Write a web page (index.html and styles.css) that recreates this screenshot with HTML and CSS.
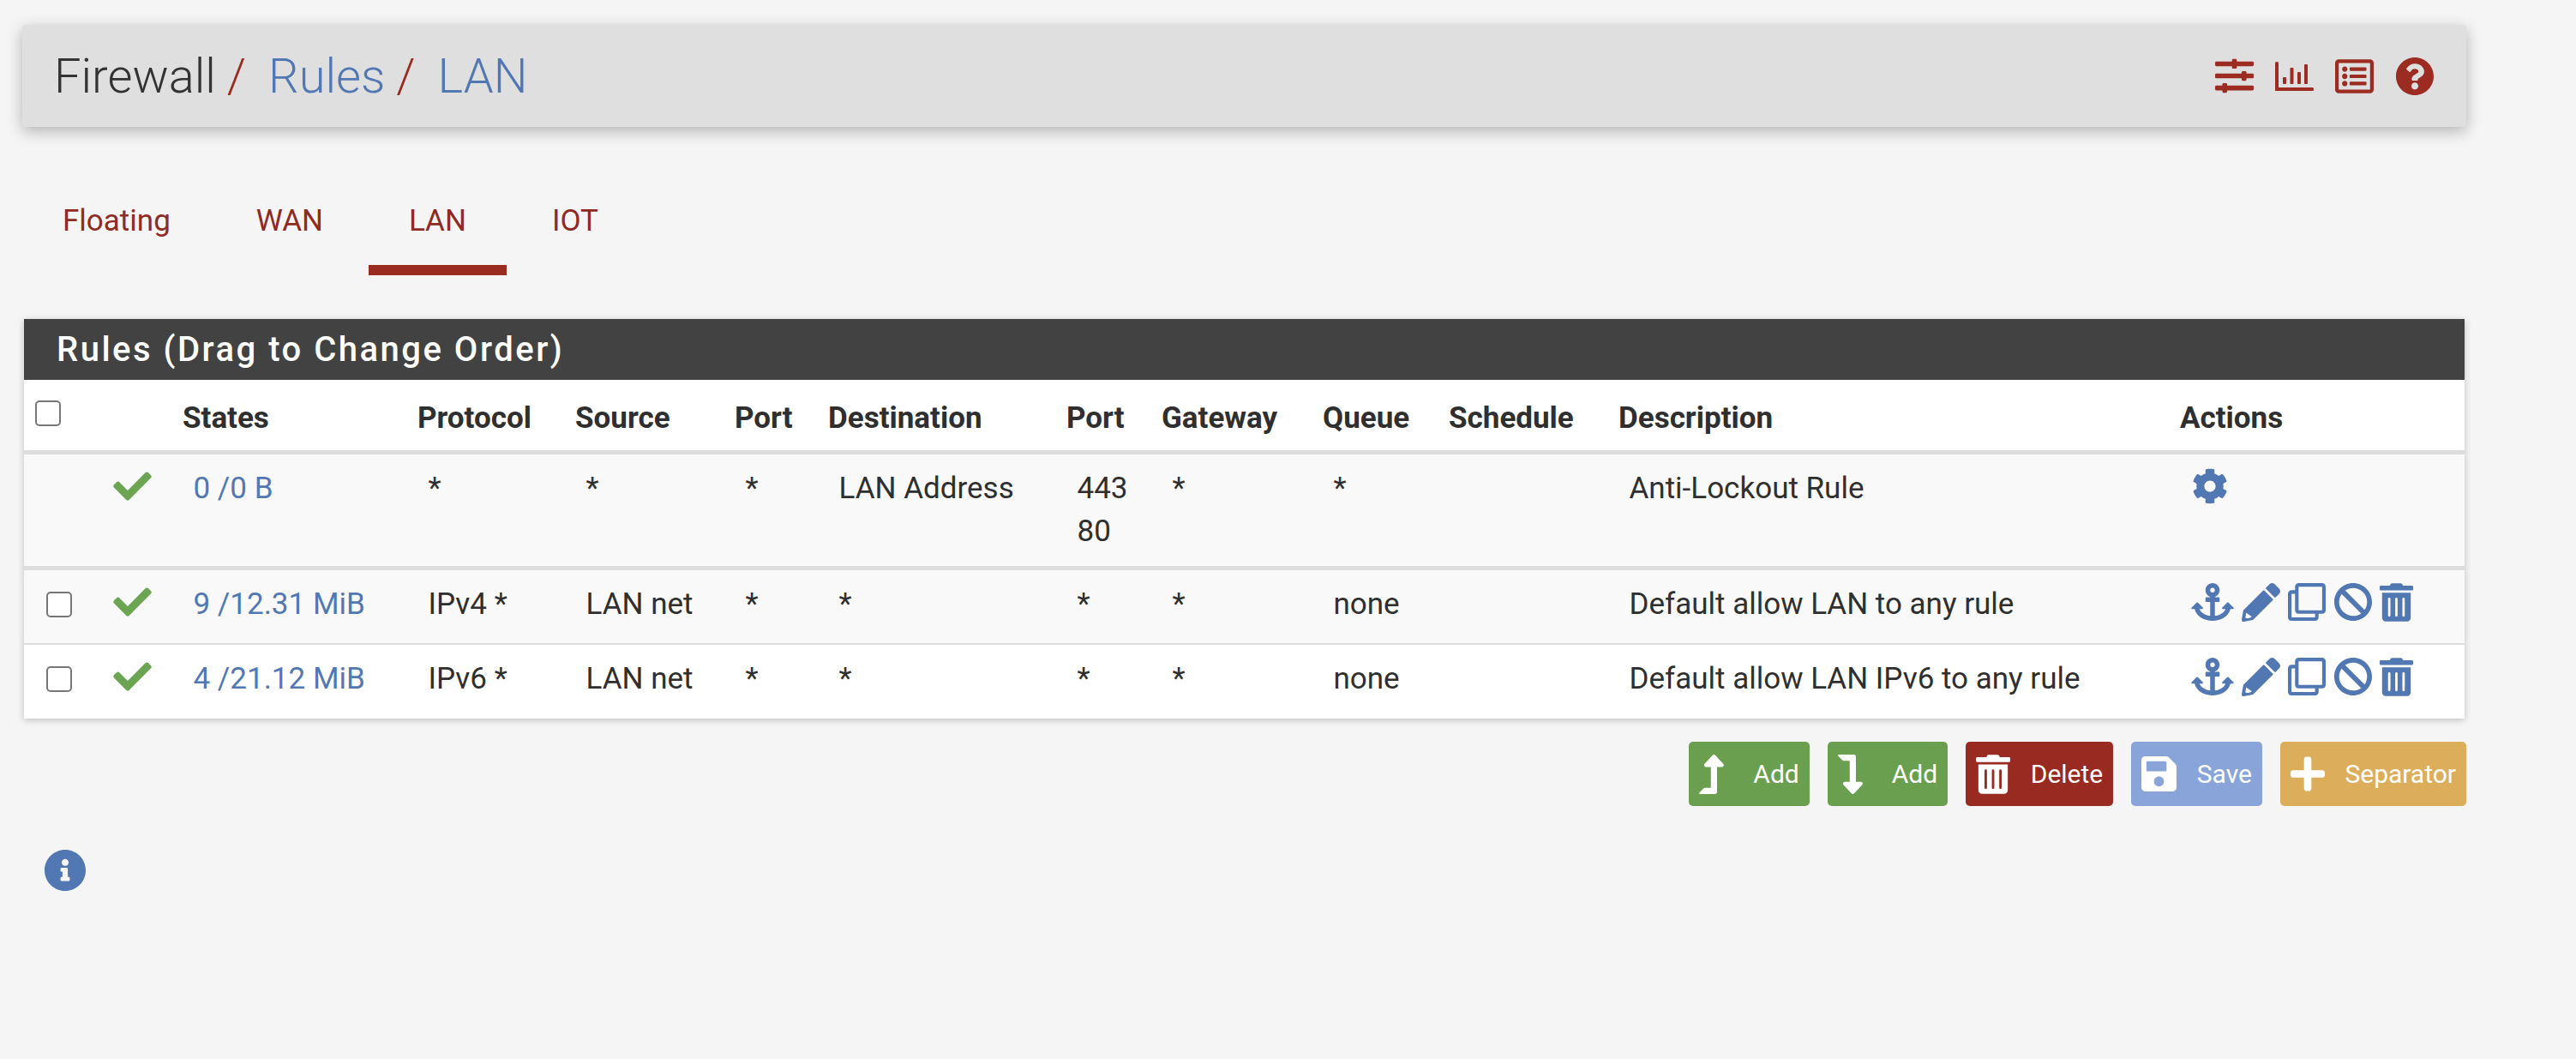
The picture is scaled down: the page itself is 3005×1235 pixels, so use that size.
FILE: index.html
```html
<!DOCTYPE html>
<html lang="en">
<head>
<meta charset="utf-8">
<title>Firewall / Rules / LAN</title>
<link rel="stylesheet" href="styles.css">
</head>
<body>
<svg class="defs" aria-hidden="true">
  <symbol id="i-sliders" viewBox="0 0 512 512"><path d="M496 384H160v-16c0-8.8-7.2-16-16-16h-32c-8.8 0-16 7.2-16 16v16H16c-8.8 0-16 7.2-16 16v32c0 8.8 7.2 16 16 16h80v16c0 8.8 7.2 16 16 16h32c8.8 0 16-7.2 16-16v-16h336c8.8 0 16-7.2 16-16v-32c0-8.8-7.2-16-16-16zm0-160h-80v-16c0-8.8-7.2-16-16-16h-32c-8.8 0-16 7.2-16 16v16H16c-8.8 0-16 7.2-16 16v32c0 8.8 7.2 16 16 16h336v16c0 8.8 7.2 16 16 16h32c8.8 0 16-7.2 16-16v-16h80c8.8 0 16-7.2 16-16v-32c0-8.8-7.2-16-16-16zm0-160H288V48c0-8.8-7.2-16-16-16h-32c-8.8 0-16 7.2-16 16v16H16C7.2 64 0 71.2 0 80v32c0 8.8 7.2 16 16 16h208v16c0 8.8 7.2 16 16 16h32c8.8 0 16-7.2 16-16v-16h208c8.8 0 16-7.2 16-16V80c0-8.8-7.2-16-16-16z"/></symbol>
  <symbol id="i-chart" viewBox="0 0 45 34"><rect width="4" height="34" rx="1.5"/><rect y="30" width="45" height="4" rx="1.5"/><rect x="9" y="18" width="4" height="8" rx="1"/><rect x="17.5" y="7" width="4" height="19" rx="1"/><rect x="26" y="12" width="4" height="14" rx="1"/><rect x="34" y="3" width="4" height="23" rx="1"/></symbol>
  <symbol id="i-list" viewBox="0 32 512 448"><path d="M464 32H48C21.49 32 0 53.49 0 80v352c0 26.51 21.49 48 48 48h416c26.51 0 48-21.49 48-48V80c0-26.51-21.49-48-48-48zm-6 400H54a6 6 0 0 1-6-6V86a6 6 0 0 1 6-6h404a6 6 0 0 1 6 6v340a6 6 0 0 1-6 6zm-42-92v24c0 6.627-5.373 12-12 12H204c-6.627 0-12-5.373-12-12v-24c0-6.627 5.373-12 12-12h200c6.627 0 12 5.373 12 12zm0-96v24c0 6.627-5.373 12-12 12H204c-6.627 0-12-5.373-12-12v-24c0-6.627 5.373-12 12-12h200c6.627 0 12 5.373 12 12zm0-96v24c0 6.627-5.373 12-12 12H204c-6.627 0-12-5.373-12-12v-24c0-6.627 5.373-12 12-12h200c6.627 0 12 5.373 12 12zm-252 12c0 19.882-16.118 36-36 36s-36-16.118-36-36 16.118-36 36-36 36 16.118 36 36zm0 96c0 19.882-16.118 36-36 36s-36-16.118-36-36 16.118-36 36-36 36 16.118 36 36zm0 96c0 19.882-16.118 36-36 36s-36-16.118-36-36 16.118-36 36-36 36 16.118 36 36z"/></symbol>
  <symbol id="i-help" viewBox="8 8 496 496"><path d="M504 256c0 136.997-111.043 248-248 248S8 392.997 8 256C8 119.083 119.043 8 256 8s248 111.083 248 248zM262.655 90c-54.497 0-89.255 22.957-116.549 63.758-3.536 5.286-2.353 12.415 2.715 16.258l34.699 26.31c5.205 3.947 12.621 3.008 16.665-2.122 17.864-22.658 30.113-35.797 57.303-35.797 20.429 0 45.698 13.148 45.698 32.958 0 14.976-12.363 22.667-32.534 33.976C247.128 238.528 216 254.941 216 296v4c0 6.627 5.373 12 12 12h56c6.627 0 12-5.373 12-12v-1.333c0-28.462 83.186-29.647 83.186-106.667 0-58.002-60.165-102-116.531-102zM256 338c-25.365 0-46 20.635-46 46 0 25.364 20.635 46 46 46s46-20.636 46-46c0-25.365-20.635-46-46-46z"/></symbol>
  <symbol id="i-check" viewBox="0 60 512 392"><path d="M173.898 439.404l-166.4-166.4c-9.997-9.997-9.997-26.206 0-36.204l36.203-36.204c9.997-9.998 26.207-9.998 36.204 0L192 312.69 432.095 72.596c9.997-9.997 26.207-9.997 36.204 0l36.203 36.204c9.997 9.997 9.997 26.206 0 36.204l-294.4 294.401c-9.998 9.997-26.207 9.997-36.204-.001z"/></symbol>
  <symbol id="i-cog" viewBox="0 0 512 512"><path d="M487.4 315.7l-42.6-24.6c4.3-23.2 4.3-47 0-70.2l42.6-24.6c4.9-2.8 7.1-8.6 5.5-14-11.1-35.6-30-67.8-54.7-94.6-3.8-4.1-10-5.1-14.8-2.3L380.8 110c-17.9-15.4-38.5-27.3-60.8-35.1V25.8c0-5.6-3.9-10.5-9.4-11.7-36.7-8.2-74.3-7.8-109.2 0-5.5 1.2-9.4 6.1-9.4 11.7V75c-22.2 7.9-42.8 19.8-60.8 35.1L88.7 85.5c-4.9-2.8-11-1.9-14.8 2.3-24.7 26.7-43.6 58.9-54.7 94.6-1.7 5.4.6 11.2 5.5 14L67.3 221c-4.3 23.2-4.3 47 0 70.2l-42.6 24.6c-4.9 2.8-7.1 8.6-5.5 14 11.1 35.6 30 67.8 54.7 94.6 3.8 4.1 10 5.1 14.8 2.3l42.6-24.6c17.9 15.4 38.5 27.3 60.8 35.1v49.2c0 5.6 3.9 10.5 9.4 11.7 36.7 8.2 74.3 7.8 109.2 0 5.5-1.2 9.4-6.1 9.4-11.7v-49.2c22.2-7.9 42.8-19.8 60.8-35.1l42.6 24.6c4.9 2.8 11 1.9 14.8-2.3 24.7-26.7 43.6-58.9 54.7-94.6 1.5-5.5-.7-11.3-5.6-14.1zM256 336c-44.1 0-80-35.9-80-80s35.9-80 80-80 80 35.9 80 80-35.9 80-80 80z"/></symbol>
  <symbol id="i-anchor" viewBox="0 0 576 512"><path d="M12.971 352h32.394C67.172 454.735 181.944 512 288 512c106.229 0 220.853-57.38 242.635-160h32.394c10.691 0 16.045-12.926 8.485-20.485l-67.029-67.029c-4.686-4.686-12.284-4.686-16.971 0l-67.029 67.029c-7.56 7.56-2.206 20.485 8.485 20.485h35.146c-20.29 54.317-84.963 86.588-144.117 94.015V256h52c6.627 0 12-5.373 12-12v-40c0-6.627-5.373-12-12-12h-52v-5.47c37.281-13.178 63.995-48.725 64-90.518C384.005 43.772 341.605.738 289.37.01 235.723-.739 192 42.525 192 96c0 41.798 26.716 77.35 64 90.53V192h-52c-6.627 0-12 5.373-12 12v40c0 6.627 5.373 12 12 12h52v190.015c-58.936-7.399-123.82-39.679-144.117-94.015h35.146c10.691 0 16.045-12.925 8.485-20.485l-67.029-67.029c-4.686-4.686-12.284-4.686-16.971 0L4.485 331.515C-3.074 339.074 2.28 352 12.971 352zM288 64c17.645 0 32 14.355 32 32s-14.355 32-32 32-32-14.355-32-32 14.355-32 32-32z"/></symbol>
  <symbol id="i-pencil" viewBox="0 0 512 512"><path fill-rule="evenodd" d="M497.9 142.1l-46.1 46.1c-4.7 4.7-12.3 4.7-17 0l-111-111c-4.7-4.7-4.7-12.3 0-17l46.1-46.1c18.7-18.7 49.1-18.7 67.9 0l60.1 60.1c18.8 18.7 18.8 49.1 0 67.9zM284.2 99.8L21.6 362.4.4 483.9c-2.9 16.4 11.4 30.6 27.8 27.8l121.5-21.3 262.6-262.6c4.7-4.7 4.7-12.3 0-17l-111-111c-4.8-4.7-12.4-4.7-17.1 0zM60 392L135 446 88 470 48 462z"/></symbol>
  <symbol id="i-copy" viewBox="0 0 512 512"><path d="M464 0H144c-26.51 0-48 21.49-48 48v48H48c-26.51 0-48 21.49-48 48v320c0 26.51 21.49 48 48 48h320c26.51 0 48-21.49 48-48v-48h48c26.51 0 48-21.49 48-48V48c0-26.51-21.49-48-48-48zM362 464H54a6 6 0 0 1-6-6V150a6 6 0 0 1 6-6h42v224c0 26.51 21.49 48 48 48h224v42a6 6 0 0 1-6 6zm96-96H150a6 6 0 0 1-6-6V54a6 6 0 0 1 6-6h308a6 6 0 0 1 6 6v308a6 6 0 0 1-6 6z"/></symbol>
  <symbol id="i-ban" viewBox="8 8 496 496"><path d="M256 8C119.034 8 8 119.033 8 256s111.034 248 248 248 248-111.034 248-248S392.967 8 256 8zm130.108 117.892c65.448 65.448 70 165.481 20.677 235.637L150.47 105.216c70.204-49.356 170.226-44.735 235.638 20.676zM125.892 386.108c-65.448-65.448-70-165.481-20.677-235.637L361.53 406.784c-70.203 49.356-170.226 44.736-235.638-20.676z"/></symbol>
  <symbol id="i-trash" viewBox="0 0 448 512"><path d="M32 464a48 48 0 0 0 48 48h288a48 48 0 0 0 48-48V128H32zm272-256a16 16 0 0 1 32 0v224a16 16 0 0 1-32 0zm-96 0a16 16 0 0 1 32 0v224a16 16 0 0 1-32 0zm-96 0a16 16 0 0 1 32 0v224a16 16 0 0 1-32 0zM432 32H312l-9.4-18.7A24 24 0 0 0 281.1 0H166.8a23.72 23.72 0 0 0-21.4 13.3L136 32H16A16 16 0 0 0 0 48v32a16 16 0 0 0 16 16h416a16 16 0 0 0 16-16V48a16 16 0 0 0-16-16z"/></symbol>
  <symbol id="i-up" viewBox="0 0 320 512"><path d="M313.553 119.669L209.587 7.666c-9.485-10.214-25.676-10.229-35.174 0L70.438 119.669C56.232 134.969 67.062 160 88.025 160H152v272H68.024a11.996 11.996 0 0 0-8.485 3.515l-56 56C-4.021 499.074 1.333 512 12.024 512H208c13.255 0 24-10.745 24-24V160h63.966c20.878 0 31.851-24.969 17.587-40.331z"/></symbol>
  <symbol id="i-down" viewBox="0 0 320 512"><path d="M313.553 392.331L209.587 504.334c-9.485 10.214-25.676 10.229-35.174 0L70.438 392.331C56.232 377.031 67.062 352 88.025 352H152V80H68.024a11.996 11.996 0 0 1-8.485-3.515l-56-56C-4.021 12.926 1.333 0 12.024 0H208c13.255 0 24 10.745 24 24v328h63.966c20.878 0 31.851 24.969 17.587 40.331z"/></symbol>
  <symbol id="i-save" viewBox="0 32 448 448"><path d="M433.941 129.941l-83.882-83.882A48 48 0 0 0 316.118 32H48C21.49 32 0 53.49 0 80v352c0 26.51 21.49 48 48 48h352c26.51 0 48-21.49 48-48V163.882a48 48 0 0 0-14.059-33.941zM224 416c-35.346 0-64-28.654-64-64 0-35.346 28.654-64 64-64s64 28.654 64 64c0 35.346-28.654 64-64 64zm96-304.52V212c0 6.627-5.373 12-12 12H76c-6.627 0-12-5.373-12-12V108c0-6.627 5.373-12 12-12h228.52c3.183 0 6.235 1.264 8.485 3.515l3.48 3.48A11.996 11.996 0 0 1 320 111.48z"/></symbol>
  <symbol id="i-plus" viewBox="0 32 448 448"><path d="M416 208H272V64c0-17.67-14.33-32-32-32h-32c-17.67 0-32 14.33-32 32v144H32c-17.67 0-32 14.33-32 32v32c0 17.67 14.33 32 32 32h144v144c0 17.67 14.33 32 32 32h32c17.67 0 32-14.33 32-32V304h144c17.67 0 32-14.33 32-32v-32c0-17.67-14.33-32-32-32z"/></symbol>
  <symbol id="i-info" viewBox="8 8 496 496"><path d="M256 8C119.043 8 8 119.083 8 256c0 136.997 111.043 248 248 248s248-111.003 248-248C504 119.083 392.957 8 256 8zm0 110c23.196 0 42 18.804 42 42s-18.804 42-42 42-42-18.804-42-42 18.804-42 42-42zm56 254c0 6.627-5.373 12-12 12h-88c-6.627 0-12-5.373-12-12v-24c0-6.627 5.373-12 12-12h12v-64h-12c-6.627 0-12-5.373-12-12v-24c0-6.627 5.373-12 12-12h64c6.627 0 12 5.373 12 12v100h12c6.627 0 12 5.373 12 12v24z"/></symbol>
</svg>

<div class="page">
  <header class="topbar">
    <h1 class="crumbs">
      <span class="crumb-text">Firewall</span><span class="slash">/</span>
      <a class="crumb-link" href="#">Rules</a><span class="slash">/</span>
      <a class="crumb-link" href="#">LAN</a>
    </h1>
    <nav class="shortcuts">
      <svg class="sc-sliders"><use href="#i-sliders"/></svg>
      <svg class="sc-chart"><use href="#i-chart"/></svg>
      <svg class="sc-list"><use href="#i-list"/></svg>
      <svg class="sc-help"><use href="#i-help"/></svg>
    </nav>
  </header>

  <ul class="tabs">
    <li><a href="#">Floating</a></li>
    <li><a href="#">WAN</a></li>
    <li class="active"><a href="#">LAN</a></li>
    <li><a href="#">IOT</a></li>
  </ul>

  <section class="panel">
    <h2 class="panel-title">Rules (Drag to Change Order)</h2>
    <table class="rules">
      <colgroup>
        <col class="c1"><col class="c2"><col class="c3"><col class="c4"><col class="c5"><col class="c6"><col class="c7"><col class="c8"><col class="c9"><col class="c10"><col class="c11"><col class="c12"><col class="c13">
      </colgroup>
      <thead>
        <tr>
          <th class="head-box"><input type="checkbox" class="box"></th>
          <th></th>
          <th>States</th>
          <th>Protocol</th>
          <th>Source</th>
          <th>Port</th>
          <th>Destination</th>
          <th>Port</th>
          <th>Gateway</th>
          <th>Queue</th>
          <th>Schedule</th>
          <th>Description</th>
          <th>Actions</th>
        </tr>
      </thead>
      <tbody>
        <tr class="lockout">
          <td></td>
          <td class="cell-check"><svg class="ok"><use href="#i-check"/></svg></td>
          <td><a href="#">0 /0 B</a></td>
          <td>*</td>
          <td>*</td>
          <td>*</td>
          <td>LAN Address</td>
          <td>443<br>80</td>
          <td>*</td>
          <td>*</td>
          <td></td>
          <td>Anti-Lockout Rule</td>
          <td class="cell-actions"><div class="actions"><svg class="a-cog"><use href="#i-cog"/></svg></div></td>
        </tr>
        <tr class="striped">
          <td class="cell-box"><input type="checkbox" class="box"></td>
          <td class="cell-check"><svg class="ok"><use href="#i-check"/></svg></td>
          <td><a href="#">9 /12.31 MiB</a></td>
          <td>IPv4 *</td>
          <td>LAN net</td>
          <td>*</td>
          <td>*</td>
          <td>*</td>
          <td>*</td>
          <td>none</td>
          <td></td>
          <td>Default allow LAN to any rule</td>
          <td class="cell-actions"><div class="actions">
            <svg class="a-anchor"><use href="#i-anchor"/></svg>
            <svg class="a-pencil"><use href="#i-pencil"/></svg>
            <svg class="a-copy"><use href="#i-copy"/></svg>
            <svg class="a-ban"><use href="#i-ban"/></svg>
            <svg class="a-trash"><use href="#i-trash"/></svg>
          </div></td>
        </tr>
        <tr class="plain">
          <td class="cell-box"><input type="checkbox" class="box"></td>
          <td class="cell-check"><svg class="ok"><use href="#i-check"/></svg></td>
          <td><a href="#">4 /21.12 MiB</a></td>
          <td>IPv6 *</td>
          <td>LAN net</td>
          <td>*</td>
          <td>*</td>
          <td>*</td>
          <td>*</td>
          <td>none</td>
          <td></td>
          <td>Default allow LAN IPv6 to any rule</td>
          <td class="cell-actions"><div class="actions">
            <svg class="a-anchor"><use href="#i-anchor"/></svg>
            <svg class="a-pencil"><use href="#i-pencil"/></svg>
            <svg class="a-copy"><use href="#i-copy"/></svg>
            <svg class="a-ban"><use href="#i-ban"/></svg>
            <svg class="a-trash"><use href="#i-trash"/></svg>
          </div></td>
        </tr>
      </tbody>
    </table>
  </section>

  <div class="buttons">
    <button class="btn btn-green btn-add"><svg class="bi-level"><use href="#i-up"/></svg>Add</button>
    <button class="btn btn-green btn-add"><svg class="bi-level"><use href="#i-down"/></svg>Add</button>
    <button class="btn btn-red"><svg class="bi-trash"><use href="#i-trash"/></svg>Delete</button>
    <button class="btn btn-blue"><svg class="bi-save"><use href="#i-save"/></svg>Save</button>
    <button class="btn btn-amber"><svg class="bi-plus"><use href="#i-plus"/></svg>Separator</button>
  </div>

  <svg class="info"><use href="#i-info"/></svg>
</div>
</body>
</html>
```
FILE: styles.css
```css
* { box-sizing: border-box; }
html, body { margin: 0; padding: 0; }
body {
  background: #f5f5f5;
  color: #2f2f2f;
  font-family: Roboto, "Liberation Sans", sans-serif;
  font-size: 35px;
  line-height: 50px;
}
a { color: inherit; text-decoration: none; }
svg { display: block; fill: currentColor; }
.defs { position: absolute; width: 0; height: 0; overflow: hidden; }

.page { width: 2877px; padding: 29px 0 0 26px; }

/* Top bar */
.topbar {
  display: flex;
  align-items: center;
  justify-content: space-between;
  height: 119px;
  padding: 0 38px 0 37px;
  background: #dfdfdf;
  border-radius: 4px;
  box-shadow: 0 5px 18px rgba(0, 0, 0, .28);
}
.crumbs {
  display: flex;
  align-items: baseline;
  margin: 0;
  font-size: 56px;
  font-weight: 300;
  line-height: 70px;
  white-space: pre;
}
.crumb-text { color: #333; }
.crumb-link { color: #5278b4; }
.slash { color: #992b21; margin: 0 26px 0 13px; }
.shortcuts {
  display: flex;
  align-items: center;
  gap: 25px;
  color: #9c2b22;
}
.sc-sliders { width: 45px; height: 45px; }
.sc-chart { width: 45px; height: 34px; }
.sc-list { width: 45px; height: 40px; }
.sc-help { width: 44px; height: 44px; margin-left: 1px; }

/* Tabs */
.tabs {
  display: flex;
  gap: 6px;
  margin: 85px 0 51px;
  padding: 0;
  list-style: none;
  font-size: 35px;
  color: #8e2c24;
}
.tabs a {
  display: block;
  padding: 0 47px 26px;
  border-bottom: 12px solid transparent;
}
.tabs .active a { border-bottom-color: #992b21; }

/* Panel */
.panel {
  margin: 0 2px 27px;
  background: #fff;
  box-shadow: 0 2px 8px rgba(0, 0, 0, .22);
}
.panel-title {
  margin: 0;
  height: 71px;
  padding-left: 38px;
  background: #424242;
  color: #fff;
  font-size: 40px;
  font-weight: 500;
  line-height: 71px;
  letter-spacing: 2.5px;
}
.rules { width: 2847px; table-layout: fixed; border-collapse: separate; border-spacing: 0; }
.c1 { width: 92px; } .c2 { width: 81px; } .c3 { width: 274px; } .c4 { width: 184px; }
.c5 { width: 186px; } .c6 { width: 109px; } .c7 { width: 278px; } .c8 { width: 111px; }
.c9 { width: 188px; } .c10 { width: 147px; } .c11 { width: 198px; } .c12 { width: 655px; }
.c13 { width: 344px; }

.rules th {
  padding: 20px 0 12px 12px;
  border-bottom: 5px solid #ddd;
  text-align: left;
  font-weight: 700;
  vertical-align: top;
}
.rules th.head-box { padding-left: 13px; }
.rules th .box { margin-top: 4px; }
.rules td {
  padding: 15px 0 15px 24.5px;
  vertical-align: top;
  white-space: nowrap;
}
.rules td a { color: #5278b4; }
.lockout td { background: #f9f9f9; border-bottom: 5px solid #ddd; height: 135px; }
.striped td { background: #f9f9f9; border-bottom: 2px solid #ddd; height: 87px; }
.plain td { height: 86px; }
.rules td.cell-check { padding-left: 12px; padding-top: 20px; color: #6ba551; }
.rules td.cell-box { padding-top: 25px; padding-left: 26px; }
.ok { width: 45px; height: 34px; }

.box {
  appearance: none;
  display: block;
  width: 30px;
  height: 30px;
  margin: 0;
  background: #fff;
  border: 2.5px solid #767676;
  border-radius: 5px;
}

.rules td.cell-actions { color: #5278b4; padding-left: 25px; }
.actions { display: flex; gap: 9px; align-items: flex-start; }
.a-cog { width: 42px; height: 44px; margin-left: 1px; }
.a-anchor { width: 50px; height: 44px; }
.a-pencil { width: 45px; height: 45px; }
.a-copy { width: 44px; height: 44px; }
.a-ban { width: 44px; height: 44px; margin-left: 1px; }
.a-trash { width: 39px; height: 45px; }

/* Buttons */
.buttons { display: flex; justify-content: flex-end; gap: 21px; }
.btn {
  display: flex;
  align-items: center;
  height: 75px;
  padding: 0 12px;
  gap: 23.5px;
  border: 0;
  border-radius: 5px;
  color: #fff;
  font-family: inherit;
  font-size: 30px;
}
.btn-add { gap: 34px; }
.btn-green { background: #6a9f50; }
.btn-red { background: #992a22; }
.btn-blue { background: #88a4d9; }
.btn-amber { background: #dcae5b; }
.bi-level { width: 29px; height: 46px; }
.bi-trash { width: 40px; height: 46px; }
.bi-save { width: 41px; height: 41px; }
.bi-plus { width: 40px; height: 41px; }

.info { width: 48px; height: 48px; margin: 51px 0 0 26px; color: #5278b4; }
```
